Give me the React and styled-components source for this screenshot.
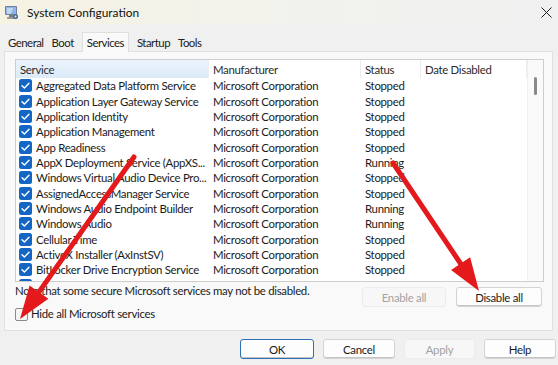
import React from 'react';
import styled, { createGlobalStyle } from 'styled-components';

const GlobalStyle = createGlobalStyle`
  html, body {
    margin: 0;
    padding: 0;
    background: #f0f0f0;
  }
  * {
    box-sizing: border-box;
  }
`;

const Window = styled.div`
  position: relative;
  width: 558px;
  height: 365px;
  overflow: hidden;
  display: flex;
  flex-direction: column;
  background: #f0f0f0;
  font-family: Lato, "Noto Sans", sans-serif;
  font-size: 11.4px;
  letter-spacing: -0.3px;
  color: #1b1b1b;
`;

const TitleBar = styled.div`
  height: 24px;
  display: flex;
  align-items: center;
  gap: 8px;
  padding: 0 6px 0 4px;
  background: linear-gradient(90deg, #f6f3e3 0%, #f3f2ea 35%, #f1f1ee 70%, #f0f0f0 100%);
`;

const Title = styled.span`
  font-size: 11.9px;
  letter-spacing: 0;
  color: #111;
`;

const CloseButton = styled.span`
  margin-left: auto;
  display: flex;
  align-items: center;
`;

const TabStrip = styled.div`
  display: flex;
  align-items: flex-end;
  height: 20px;
  margin-top: 7px;
  padding-left: 4px;
`;

const Tab = styled.div`
  height: ${p => (p.$active ? '20px' : '18px')};
  display: flex;
  align-items: center;
  padding: 0 ${p => (p.$active ? '4px' : '3px')};
  margin: 0 ${p => (p.$active ? '4px' : '0')};
  background: ${p => (p.$active ? '#f9f9f9' : 'transparent')};
  border: 1px solid ${p => (p.$active ? '#dedede' : 'transparent')};
  border-bottom: none;
  position: relative;
  top: ${p => (p.$active ? '1px' : '0')};
  color: #222;
  letter-spacing: -0.5px;
`;

const Panel = styled.div`
  margin: 0 5px 0 4px;
  height: 280px;
  background: #f9f9f9;
  border: 1px solid #e0e0e0;
  padding: 7px 9px 0 10px;
  display: flex;
  flex-direction: column;
`;

const ListBox = styled.div`
  width: 529px;
  height: 223px;
  background: #fff;
  border: 1px solid #cdcdcd;
  display: flex;
  overflow: hidden;
`;

const Table = styled.div`
  flex: 1;
  display: flex;
  flex-direction: column;
  overflow: hidden;
`;

const COLS = '193px 152px 60px 1fr';

const HeaderRow = styled.div`
  display: grid;
  grid-template-columns: ${COLS};
  height: 18px;
  flex-shrink: 0;
`;

const HeaderCell = styled.div`
  display: flex;
  align-items: center;
  padding-left: 4px;
  border-right: 1px solid #ececec;
  background: ${p => (p.$sorted ? 'linear-gradient(180deg, #eaf3fc 0%, #dcebf9 100%)' : '#fff')};
  color: #2b2b2b;
  white-space: nowrap;
`;

const Row = styled.div`
  display: grid;
  grid-template-columns: ${COLS};
  height: 15.35px;
  flex-shrink: 0;
  align-items: center;
`;

const Cell = styled.div`
  display: flex;
  align-items: center;
  gap: 4px;
  padding-left: ${p => (p.$first ? '3px' : '4px')};
  white-space: nowrap;
  overflow: hidden;

  svg {
    flex-shrink: 0;
  }
`;

const ScrollTrack = styled.div`
  width: 16px;
  flex-shrink: 0;
  display: flex;
  justify-content: center;
  padding-top: 17px;
  background: #fafafa;
  border-left: 1px solid #f0f0f0;
`;

const ScrollThumb = styled.div`
  width: 3px;
  height: 18px;
  border-radius: 2px;
  background: #8a8a8a;
`;

const Lower = styled.div`
  display: flex;
  justify-content: space-between;
  margin-top: 2px;
  padding-right: 1px;
`;

const LowerLeft = styled.div`
  display: flex;
  flex-direction: column;
  gap: 9px;
`;

const Note = styled.div`
  color: #222;
  line-height: 14px;
`;

const CheckRow = styled.label`
  display: flex;
  align-items: center;
  gap: 3px;
  line-height: 14px;
`;

const EmptyBox = styled.span`
  width: 13px;
  height: 13px;
  border: 1px solid #8a8a8a;
  border-radius: 2px;
  background: #f5f5f5;
  display: inline-block;
  flex-shrink: 0;
`;

const ButtonRow = styled.div`
  display: flex;
  gap: 10px;
  padding-top: 3px;
`;

const Button = styled.div`
  width: ${p => p.$w || 73}px;
  height: 20px;
  display: flex;
  align-items: center;
  justify-content: center;
  border-radius: 3px;
  background: ${p => (p.$disabled ? '#f7f7f7' : '#fdfdfd')};
  border: 1px solid ${p => (p.$focus ? '#2f6fb6' : p.$disabled ? '#ececec' : '#d4d4d4')};
  box-shadow: ${p => (p.$disabled ? 'none' : 'inset 0 -1px 0 #c4c4c4')};
  color: ${p => (p.$disabled ? '#a3a3a3' : '#1b1b1b')};
`;

const Footer = styled.div`
  display: flex;
  justify-content: flex-end;
  gap: 9px;
  padding: 8px 2px 0 0;
`;

const Overlay = styled.svg`
  position: absolute;
  left: 0;
  top: 0;
  pointer-events: none;
`;

const CheckMark = () => (
  <svg width="13" height="13" viewBox="0 0 13 13">
    <rect x="0" y="0" width="13" height="13" rx="2.5" fill="#1366c4" />
    <path d="M3 6.8 L5.4 9.1 L10 4.2" fill="none" stroke="#fff" strokeWidth="1.4" strokeLinecap="round" strokeLinejoin="round" />
  </svg>
);

const AppIcon = () => (
  <svg width="15" height="15" viewBox="0 0 15 15">
    <rect x="1" y="1" width="12" height="9" rx="1" fill="#6d7f99" />
    <rect x="2" y="2" width="10" height="7" fill="#8fb4e6" />
    <path d="M3 4 h6 M3 6 h5 M3 8 h4" stroke="#fff" strokeWidth="0.9" />
    <rect x="5" y="10" width="4" height="2" fill="#7a7a7a" />
    <rect x="3" y="12" width="8" height="2" rx="0.5" fill="#9a9a9a" />
    <circle cx="11.5" cy="11.5" r="2.6" fill="#4a6fa0" />
    <circle cx="11.5" cy="11.5" r="1" fill="#dfe7f2" />
  </svg>
);

const CloseIcon = () => (
  <svg width="11" height="11" viewBox="0 0 11 11">
    <path d="M0.5 0.5 L10.5 10.5 M10.5 0.5 L0.5 10.5" stroke="#1b1b1b" strokeWidth="1" />
  </svg>
);

const services = [
  ['Aggregated Data Platform Service', 'Stopped'],
  ['Application Layer Gateway Service', 'Stopped'],
  ['Application Identity', 'Stopped'],
  ['Application Management', 'Stopped'],
  ['App Readiness', 'Stopped'],
  ['AppX Deployment Service (AppXS...', 'Running'],
  ['Windows Virtual Audio Device Pro...', 'Stopped'],
  ['AssignedAccessManager Service', 'Stopped'],
  ['Windows Audio Endpoint Builder', 'Running'],
  ['Windows Audio', 'Running'],
  ['Cellular Time', 'Stopped'],
  ['ActiveX Installer (AxInstSV)', 'Stopped'],
  ['BitLocker Drive Encryption Service', 'Stopped'],
  ['Base Filtering Engine', 'Running'],
];

const tabs = ['General', 'Boot', 'Services', 'Startup', 'Tools'];

// red annotation arrow: shaft from (x1,y1), head tip at (x2,y2)
const Arrow = ({ x1, y1, x2, y2, len = 33, half = 11.5 }) => {
  const dx = x2 - x1;
  const dy = y2 - y1;
  const d = Math.hypot(dx, dy);
  const ux = dx / d;
  const uy = dy / d;
  const bx = x2 - ux * len;
  const by = y2 - uy * len;
  const pts = `${x2},${y2} ${bx - uy * half},${by + ux * half} ${bx + uy * half},${by - ux * half}`;
  return (
    <g>
      <line x1={x1} y1={y1} x2={bx + ux * 2} y2={by + uy * 2} stroke="#e3191b" strokeWidth="5" strokeLinecap="round" />
      <polygon points={pts} fill="#e3191b" />
    </g>
  );
};

export default function App() {
  return (
    <Window>
      <GlobalStyle />
      <TitleBar>
        <AppIcon />
        <Title>System Configuration</Title>
        <CloseButton>
          <CloseIcon />
        </CloseButton>
      </TitleBar>

      <TabStrip>
        {tabs.map(t => (
          <Tab key={t} $active={t === 'Services'}>{t}</Tab>
        ))}
      </TabStrip>

      <Panel>
        <ListBox>
          <Table>
            <HeaderRow>
              <HeaderCell $sorted>Service</HeaderCell>
              <HeaderCell>Manufacturer</HeaderCell>
              <HeaderCell>Status</HeaderCell>
              <HeaderCell>Date Disabled</HeaderCell>
            </HeaderRow>
            {services.map(([name, status]) => (
              <Row key={name}>
                <Cell $first>
                  <CheckMark />
                  {name}
                </Cell>
                <Cell>Microsoft Corporation</Cell>
                <Cell>{status}</Cell>
                <Cell />
              </Row>
            ))}
          </Table>
          <ScrollTrack>
            <ScrollThumb />
          </ScrollTrack>
        </ListBox>

        <Lower>
          <LowerLeft>
            <Note>Note that some secure Microsoft services may not be disabled.</Note>
            <CheckRow>
              <EmptyBox />
              Hide all Microsoft services
            </CheckRow>
          </LowerLeft>
          <ButtonRow>
            <Button $w={84} $disabled>Enable all</Button>
            <Button $w={86}>Disable all</Button>
          </ButtonRow>
        </Lower>
      </Panel>

      <Footer>
        <Button $w={74} $focus>OK</Button>
        <Button $w={72}>Cancel</Button>
        <Button $w={71} $disabled>Apply</Button>
        <Button $w={72}>Help</Button>
      </Footer>

      <Overlay width="558" height="365" viewBox="0 0 558 365">
        <Arrow x1={134} y1={157} x2={20} y2={319} />
        <Arrow x1={393} y1={163} x2={479} y2={291} />
      </Overlay>
    </Window>
  );
}
